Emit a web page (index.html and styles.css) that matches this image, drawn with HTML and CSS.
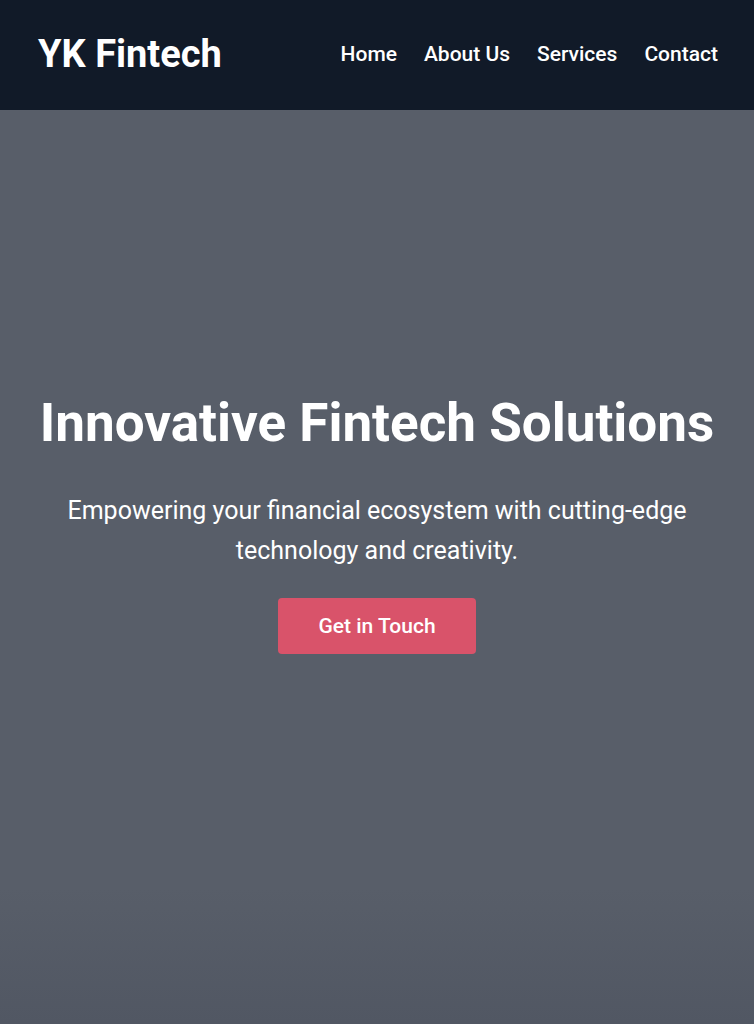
FILE: index.html
```html
<!DOCTYPE html>
<html lang="en">
<head>
<meta charset="utf-8">
<title>YK Fintech</title>
<link rel="stylesheet" href="styles.css">
</head>
<body>
<header class="site-header">
  <div class="logo">YK Fintech</div>
  <nav class="nav">
    <a href="#">Home</a>
    <a href="#">About Us</a>
    <a href="#">Services</a>
    <a href="#">Contact</a>
  </nav>
</header>
<section class="hero">
  <div class="hero-content">
    <h1 class="hero-title">Innovative Fintech Solutions</h1>
    <p class="hero-text">Empowering your financial ecosystem with cutting-edge technology and creativity.</p>
    <a class="btn" href="#">Get in Touch</a>
  </div>
</section>
</body>
</html>
```

FILE: styles.css
```css
* { box-sizing: border-box; }
html, body { margin: 0; padding: 0; }
body {
  font-family: Roboto, "Liberation Sans", sans-serif;
  color: #fff;
  background: #585e69;
}
.site-header {
  height: 110px;
  background: #111a28;
  display: flex;
  align-items: center;
  justify-content: space-between;
  padding: 0 36px 0 38px;
}
.logo {
  font-size: 38px;
  font-weight: 700;
  color: #fff;
  margin-top: -2px;
}
.nav {
  display: flex;
  gap: 27px;
}
.nav a {
  color: #fff;
  text-decoration: none;
  font-size: 21px;
  font-weight: 500;
  margin-top: -2px;
}
.hero {
  height: 914px;
  background: linear-gradient(to bottom, #585e69 0%, #585e69 85%, #515763 100%);
  display: flex;
  justify-content: center;
}
.hero-content {
  padding-top: 282px;
  text-align: center;
  display: flex;
  flex-direction: column;
  align-items: center;
}
.hero-title {
  margin: 0;
  font-size: 53px;
  font-weight: 700;
  line-height: 1.2;
}
.hero-text {
  margin: 35px 0 0;
  max-width: 660px;
  font-size: 25px;
  line-height: 40px;
}
.btn {
  margin-top: 27px;
  display: inline-block;
  width: 198px;
  height: 56px;
  line-height: 56px;
  background: #d9536a;
  color: #fff;
  text-decoration: none;
  font-size: 21px;
  font-weight: 500;
  border-radius: 4px;
}
```
